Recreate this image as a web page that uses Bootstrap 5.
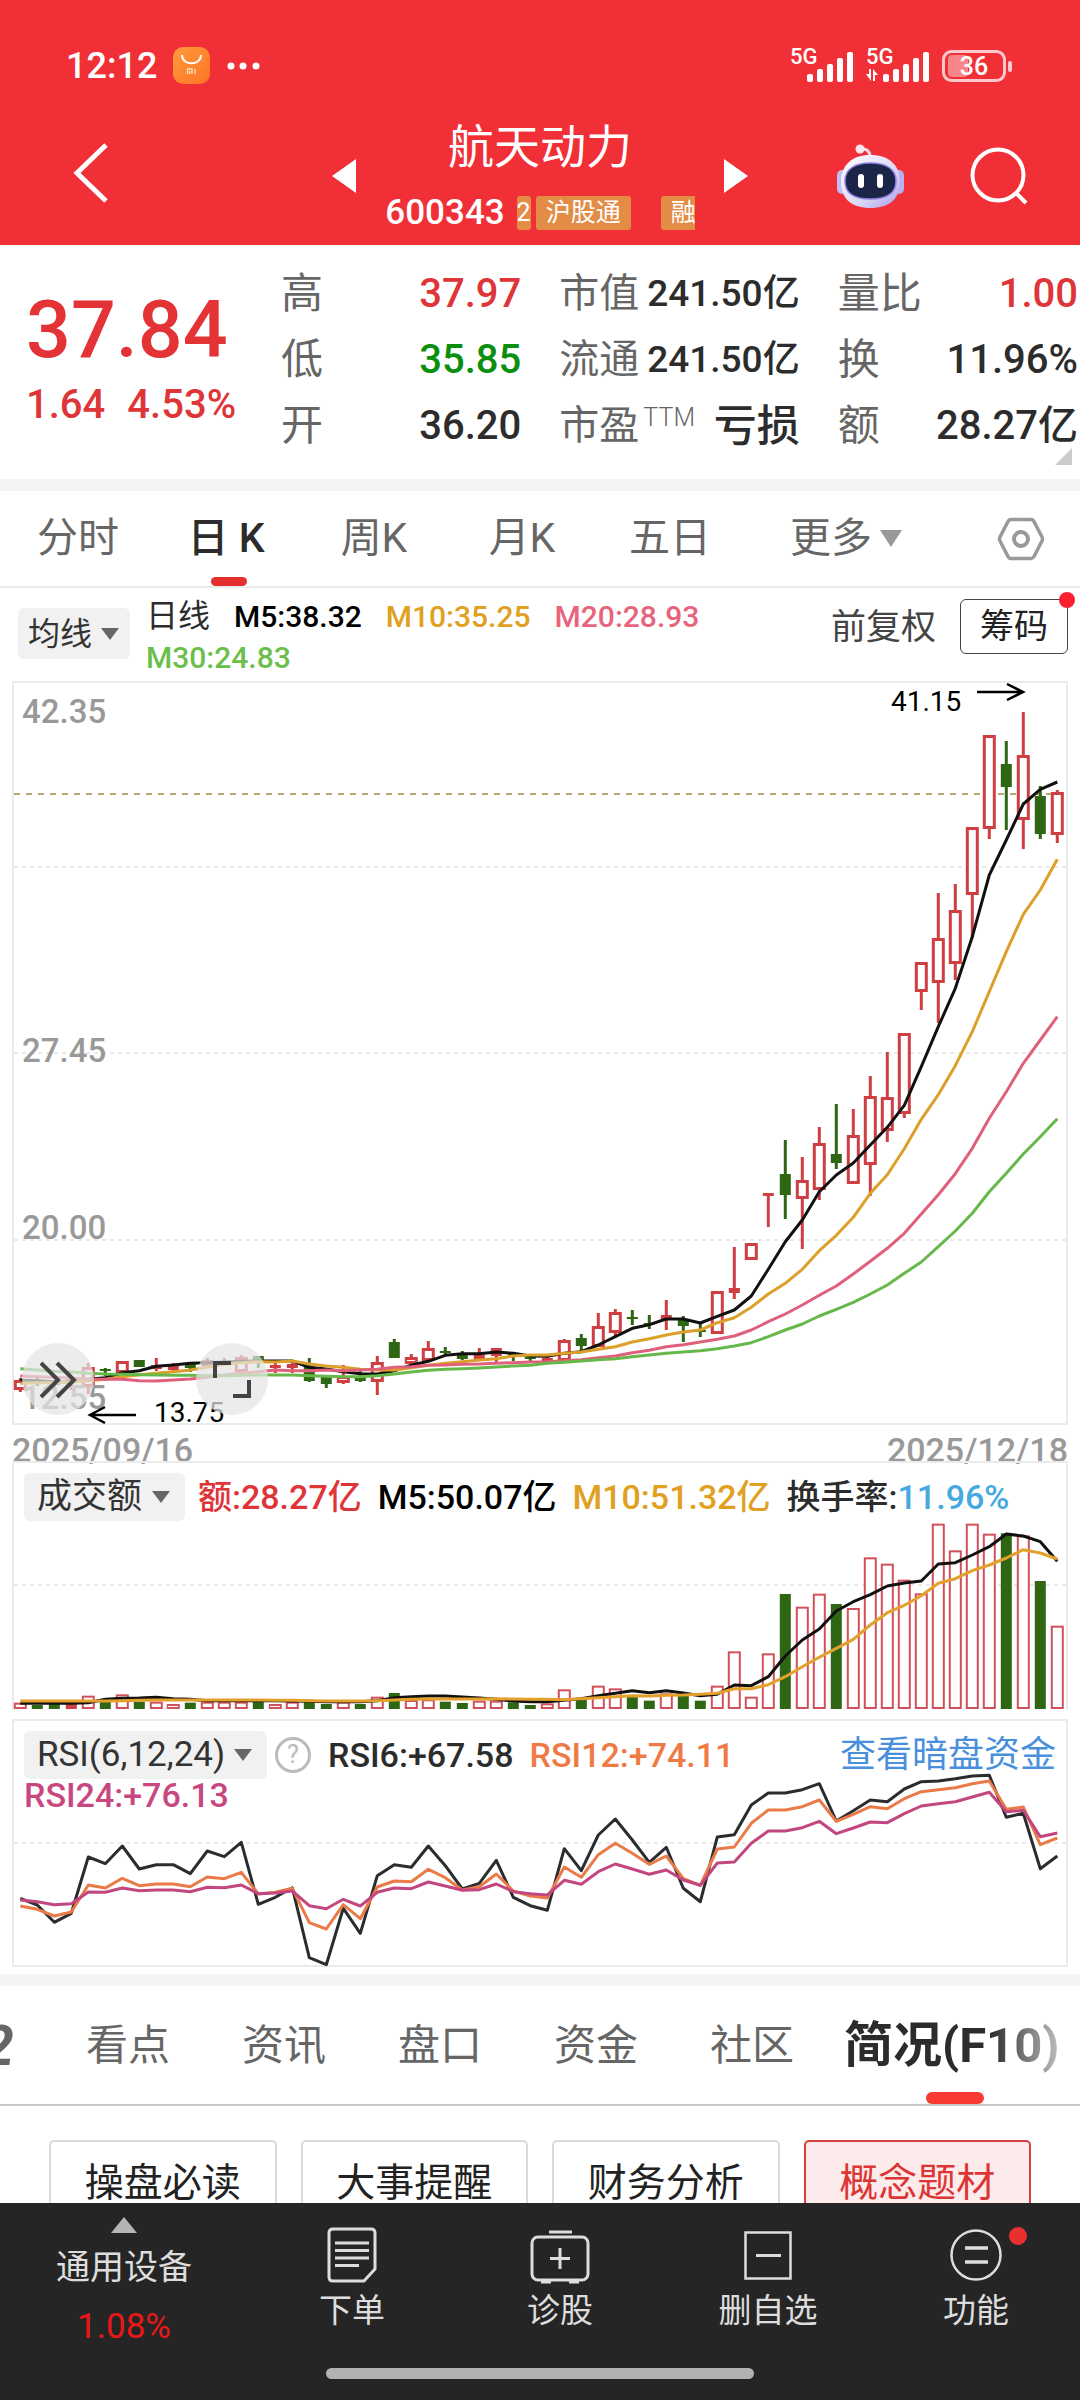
<!DOCTYPE html>
<html lang="zh-CN">
<head>
<meta charset="utf-8">
<meta name="viewport" content="width=device-width, initial-scale=1">
<title>航天动力 600343</title>
<link href="https://cdn.jsdelivr.net/npm/bootstrap@5.3.0/dist/css/bootstrap.min.css" rel="stylesheet">
<style>
  :root { --brand:#f12f37; --up:#de3538; --down:#0a8f0e; --ink:#2c2c2c; --muted:#666; }
  body { font-family:Roboto,"Noto Sans CJK SC",sans-serif; color:var(--ink); background:#fff; overflow-x:hidden; }
  button, select { font-family:inherit; color:inherit; }
  svg { display:block; overflow:visible; }
  a { text-decoration:none; color:inherit; }
  .plain { background:none; border:0; padding:0; }
  .topbar { background:var(--brand); color:#fff; padding-bottom:8px; }
  .statusbar { padding:36px 66px 0 66px; height:96px; }
  .clock { font-size:36px; font-weight:500; line-height:60px; }
  .titlebar { display:grid; grid-template-columns:1fr auto 1fr; align-items:center; padding:0 52px; margin-top:19px; height:122px; }
  .back-btn { margin-left:20px; }
  .stock-id { width:368px; text-align:center; padding-bottom:5px; }
  .stock-name { font-size:46px; line-height:60px; font-weight:400; margin:0; }
  .stock-code { font-size:35px; line-height:36px; font-weight:500; margin-right:12px; }
  .codeline { height:36px; margin-top:18px; }
  .tagstrip { width:178px; height:34px; overflow:hidden; gap:5px; }
  .tag { background:#e38c46; font-size:25px; line-height:34px; padding:0 10px; border-radius:3px; flex:none; }
  .tag-cut { width:14px; padding:0; overflow:hidden; direction:rtl; }
  .tag-gap { margin-left:25px; }

  .quote { padding:16px 2px 0 26px; height:234px; position:relative; }
  .quote-main { width:255px; padding-top:27px; color:#e33336; flex:none; }
  .price { font-size:79px; line-height:84px; font-weight:500; }
  .change { font-size:40px; line-height:44px; margin-top:11px; gap:22px; color:var(--up); font-weight:500; }
  .quote-cols { gap:38px; }
  .figures { margin:0; }
  .figures > div { display:flex; justify-content:space-between; align-items:center; height:66px; white-space:nowrap; }
  .figures dt { font-weight:400; font-size:42px; line-height:66px; color:var(--muted); }
  .figures dd { margin:0; font-size:40px; line-height:66px; font-weight:500; }
  .figures-tight dt { font-size:40px; }
  .figures-tight dd { font-size:37px; }
  .figures-tight .loss { font-size:43px; }
  .figures sup { font-size:25px; font-weight:300; top:-13px; margin-left:4px; }
  .up { color:var(--up); } .down { color:var(--down); }
  .corner { position:absolute; right:8px; bottom:14px; border-left:17px solid transparent; border-bottom:17px solid #ccc; }
  .band { height:12px; background:#f4f4f4; }

  .periods { height:97px; padding:0 36px 0 4px; border-bottom:2px solid #ebebeb; }
  .period { width:148px; height:95px; font-size:41px; line-height:95px; color:var(--muted); text-align:center; position:relative; }
  .period.active { color:var(--ink); font-weight:500; }
  .period.active::after { content:""; position:absolute; left:59px; bottom:0; width:36px; height:9px; border-radius:5px; background:#e3302f; }
  .period-more { width:204px; }
  .caret { display:inline-block; border:11px solid transparent; border-top:17px solid #999; border-bottom:0; vertical-align:5px; margin-left:8px; }

  .legendbar { height:93px; padding:7px 12px 0 18px; }
  .picker { position:relative; flex:none; }
  .picker::after { content:""; position:absolute; right:15px; top:50%; margin-top:-6px; border:9px solid transparent; border-top:12px solid #666; border-bottom:0; pointer-events:none; }
  .picker select { appearance:none; border:0; border-radius:6px; background:#f1f1f1; color:#333; font-size:35px; line-height:48px; height:48px; padding:0 0 0 13px; width:161px; display:block; }
  .picker-ma { margin-top:13px; }
  .picker-ma select { font-size:32px; height:51px; padding-left:10px; width:112px; }
  .picker-ma::after { right:11px; }
  .picker-rsi select { width:243px; font-size:35px; }
  .ma-values { font-size:30px; line-height:41px; font-weight:500; column-gap:24px; margin-left:16px; padding-top:1px; width:670px; flex:none; }
  .ma-values .period-name { font-size:32px; font-weight:400; }
  .adjust { font-size:35px; line-height:55px; color:#444; white-space:nowrap; margin-top:5px; }
  .chip-btn { font-size:34px; line-height:53px; height:55px; border:1px solid #444; border-radius:6px; background:#fff; padding:0; width:108px; position:relative; color:#222; margin-top:4px; }
  .reddot { position:absolute; width:16px; height:16px; border-radius:50%; background:#fa2032; }
  .chip-btn .reddot { right:-8px; top:-8px; }

  .panel { margin:0 12px; border:2px solid #ebebeb; position:relative; }
  .panel svg.plot { width:100%; height:auto; }
  .panel-vol { border-bottom:0; margin-bottom:9px; }
  .panel-rsi { margin-bottom:7px; }
  .panel-head { position:absolute; top:10px; left:10px; right:10px; font-size:34px; line-height:48px; font-weight:500; white-space:nowrap; }
  .vol-values { margin-left:13px; gap:16px; }
  .dates { height:36px; padding:0 12px; font-size:34px; line-height:50px; color:#999; font-weight:500; }
  .round-btn { position:absolute; bottom:8px; width:72px; height:72px; border-radius:50%; border:0; padding:0; background:rgba(228,228,228,.72); }
  .rb-shift { left:8px; } .rb-full { left:182px; }
  .m10 { color:#e0a020; } .m20 { color:#e8647c; } .m30 { color:#6abf4b; }
  .r12 { color:#ef7a45; } .rate { color:#46a9e0; }
  .fund-link { color:#4a8fdc; font-size:36px; font-weight:400; }
  .help { width:36px; height:36px; border:3px solid #bbb; border-radius:50%; color:#bbb; font-size:25px; line-height:30px; text-align:center; margin:0 17px 0 8px; }
  .rsi2 { line-height:36px; margin-top:-2px; color:#c9477f; }

  .sections { height:120px; overflow:hidden; gap:72px; border-bottom:2px solid #c8c8c8; position:relative; white-space:nowrap; }
  .section-tab { font-size:42px; line-height:120px; color:var(--muted); width:84px; flex:none; }
  .section-cut { width:14px; display:flex; justify-content:flex-end; font-weight:700; font-size:56px; overflow:hidden; font-style:italic; }
  .section-tab.active { width:218px; font-size:49px; font-weight:700; color:var(--ink); position:relative; margin-left:-22px; }
  .section-tab.active::after { content:""; position:absolute; left:82px; bottom:0; width:58px; height:12px; border-radius:6px; background:#f93a33; }
  .sections::after { content:""; position:absolute; right:0; top:20px; width:90px; height:70px; background:linear-gradient(90deg,rgba(255,255,255,0),rgba(255,255,255,.9)); }
  .topics { padding:34px 49px 0; gap:24px; }
  .topic { flex:1; height:84px; border:2px solid #dadada; border-radius:5px; background:#fff; font-size:39px; line-height:82px; padding:0; color:#222; }
  .topic.active { border-color:#d8403f; background:#fdeaea; color:#dc3535; }

  .dock { background:#252525; color:#ddd; height:197px; }
  .dock-row { height:150px; }
  .dock-item { font-size:33px; line-height:44px; height:130px; padding-top:22px; position:relative; width:208px; }
  .dock-item svg { margin:0 auto 5px; }
  .dock-index { width:248px; height:150px; padding:12px 0 0 0; font-size:34px; line-height:50px; text-align:center; }
  .dock-index .tri { border:13px solid transparent; border-bottom:16px solid #b4b4b4; border-top:0; display:block; width:26px; margin:0 auto 9px; }
  .dock-index .pct { color:#ea1717; font-size:35px; display:block; margin-top:10px; }
  .dock-index .nm { display:block; }
  .dock .reddot { width:18px; height:18px; left:137px; top:24px; background:#e8302f; }
  .homebar { width:428px; height:11px; border-radius:6px; background:#b1b1b1; margin:15px auto 0; }
</style>
<script src="https://cdn.jsdelivr.net/npm/bootstrap@5.3.0/dist/js/bootstrap.bundle.min.js"></script>
</head>
<body>
<header class="topbar">
  <div class="statusbar d-flex align-items-center">
    <span class="clock">12:12</span>
    <svg class="ms-3" width="38" height="38" viewBox="0 0 38 38" aria-hidden="true"><defs><linearGradient id="mi" x1="0" y1="0" x2="1" y2="1"><stop offset="0" stop-color="#ff9a3c"/><stop offset="1" stop-color="#ff7426"/></linearGradient></defs><rect width="37" height="37" rx="10" fill="url(#mi)"/><path d="M9 8c0 11 19 11 19 0" fill="none" stroke="#fff" stroke-width="2"/><path d="M14.500 27v-5h4.500v5M16.800 24v3M22 22v5" fill="none" stroke="#ffe2c4" stroke-width="1.300"/></svg>
    <svg class="ms-3" width="34" height="8" viewBox="0 0 34 8" fill="#fff" aria-hidden="true"><circle cx="4" cy="4" r="3.500"/><circle cx="16" cy="4" r="3.500"/><circle cx="29" cy="4" r="3.500"/></svg>
    <svg class="ms-auto" width="226" height="52" viewBox="788 39 226 52" fill="#fff" role="img" aria-label="5G 信号 36%">
      <g font-size="22" font-weight="500"><text x="790" y="63">5G</text><text x="866" y="63">5G</text></g>
      <rect x="807" y="73" width="6" height="8" rx="2"/><rect x="817" y="68" width="6" height="13" rx="2"/><rect x="827" y="63" width="6" height="18" rx="2"/><rect x="837" y="57" width="6" height="24" rx="2"/><rect x="847" y="51" width="6" height="30" rx="2"/>
      <rect x="883" y="73" width="6" height="8" rx="2"/><rect x="893" y="68" width="6" height="13" rx="2"/><rect x="903" y="63" width="6" height="18" rx="2"/><rect x="913" y="57" width="6" height="24" rx="2"/><rect x="923" y="51" width="6" height="30" rx="2"/>
      <path d="M866 73h3v-5h2v12zM873 80V68l5 6h-3v6z"/>
      <rect x="943.500" y="50.500" width="61" height="29" rx="8" fill="none" stroke="#fbc9cb" stroke-width="3"/><rect x="948" y="54" width="20" height="22" rx="4" fill="#f8858a"/><rect x="1008" y="60" width="4" height="11" rx="2" fill="#fbc9cb"/>
      <text x="974" y="74" font-size="25" text-anchor="middle" font-weight="500">36</text>
    </svg>
  </div>
  <div class="titlebar">
    <div><button class="plain back-btn" aria-label="返回"><svg width="38" height="62" viewBox="0 0 38 62" fill="none" stroke="#fff" stroke-width="5"><path d="M34 3 5 31l29 28"/></svg></button></div>
    <div class="d-flex align-items-center">
      <button class="plain" aria-label="上一只"><svg width="24" height="36" viewBox="0 0 24 36" fill="#fff"><path d="M24 1v34L0 18z"/></svg></button>
      <div class="stock-id">
        <h1 class="stock-name">航天动力</h1>
        <div class="codeline d-flex align-items-center justify-content-center">
          <span class="stock-code">600343</span>
          <div class="tagstrip d-flex"><span class="tag tag-cut">2</span><span class="tag">沪股通</span><span class="tag tag-gap">融</span></div>
        </div>
      </div>
      <button class="plain" aria-label="下一只"><svg width="24" height="36" viewBox="0 0 24 36" fill="#fff"><path d="M0 1v34l24-17z"/></svg></button>
    </div>
    <div class="d-flex justify-content-end align-items-center">
      <button class="plain me-5" aria-label="智能助手"><svg class="me-3" width="70" height="66" viewBox="0 0 70 66">
        <defs><linearGradient id="rb" x1="0" y1="0" x2="1" y2="1"><stop offset="0" stop-color="#fff"/><stop offset=".6" stop-color="#dcd8f6"/><stop offset="1" stop-color="#a99be6"/></linearGradient></defs>
        <path d="M34 14c0-6-3-8-10-9" fill="none" stroke="#f4dce8" stroke-width="3"/><circle cx="24" cy="6" r="4.500" fill="#fbe6ee"/>
        <rect x="1" y="27" width="10" height="24" rx="5" fill="#c4bdf2"/><rect x="58" y="27" width="10" height="24" rx="5" fill="#b8aef0"/>
        <path d="M34.500 12C53 12 64 22 64 39S53 65 34.500 65 5 56 5 39s11-27 29.500-27z" fill="url(#rb)"/>
        <path d="M34.500 20C50 20 60 26 60 38s-9 18-25.500 18S9 50 9 38s10-18 25.500-18z" fill="#1b2547" stroke="#8c7fe0" stroke-width="1.500"/>
        <rect x="22" y="31" width="6" height="14" rx="3" fill="#fff"/><rect x="41" y="31" width="6" height="14" rx="3" fill="#fff"/></svg></button>
      <button class="plain" aria-label="搜索"><svg width="58" height="58" viewBox="0 0 58 58" fill="none" stroke="#fff" stroke-width="4"><circle cx="28" cy="28" r="25.500"/><path d="m46 46 10 10"/></svg></button>
    </div>
  </div>
</header>

<main>
  <section class="quote d-flex">
    <div class="quote-main">
      <div class="price">37.84</div>
      <div class="change d-flex"><span>1.64</span><span>4.53%</span></div>
    </div>
    <div class="quote-cols d-flex flex-grow-1">
      <dl class="figures w-100"><div><dt>高</dt><dd class="up">37.97</dd></div><div><dt>低</dt><dd class="down">35.85</dd></div><div><dt>开</dt><dd>36.20</dd></div></dl>
      <dl class="figures figures-tight w-100"><div><dt>市值</dt><dd>241.50亿</dd></div><div><dt>流通</dt><dd>241.50亿</dd></div><div><dt>市盈<sup>TTM</sup></dt><dd class="loss">亏损</dd></div></dl>
      <dl class="figures w-100"><div><dt>量比</dt><dd class="up">1.00</dd></div><div><dt>换</dt><dd>11.96%</dd></div><div><dt>额</dt><dd>28.27亿</dd></div></dl>
    </div>
    <span class="corner"></span>
  </section>
  <div class="band"></div>

  <nav class="periods d-flex align-items-start">
    <button class="plain period">分时</button><button class="plain period active">日 K</button><button class="plain period">周K</button><button class="plain period">月K</button><button class="plain period">五日</button><button class="plain period period-more">更多<span class="caret"></span></button>
    <button class="plain ms-auto align-self-center" aria-label="设置"><svg width="46" height="44" viewBox="0 0 46 44" fill="none" stroke="#999" stroke-width="4"><path d="M13 2.500h20q2 0 3 2L44 20q1 2 0 4l-8 15.500q-1 2-3 2H13q-2 0-3-2L2 24q-1-2 0-4l8-15.500q1-2 3-2z" stroke-width="3.500"/><circle cx="23" cy="22" r="7"/></svg></button>
  </nav>

  <div class="legendbar d-flex align-items-start">
    <label class="picker picker-ma"><select aria-label="均线"><option>均线</option></select></label>
    <div class="ma-values d-flex flex-wrap"><span class="period-name">日线</span><span class="text-black">M5:38.32</span><span class="m10">M10:35.25</span><span class="m20">M20:28.93</span><span class="m30">M30:24.83</span></div>
    <span class="adjust ms-auto">前复权</span>
    <button class="chip-btn ms-4">筹码<span class="reddot"></span></button>
  </div>

  <section class="panel">
    <svg class="plot" id="kline" viewBox="14 683 1052 740" role="img" aria-label="日K线"></svg>
    <button class="round-btn rb-shift" aria-label="右移"><svg width="72" height="72" viewBox="0 0 72 72" fill="none" stroke="#444" stroke-width="4"><path d="m19 20 17 17-17 17M35 20l17 17-17 17"/></svg></button>
    <button class="round-btn rb-full" aria-label="全屏"><svg width="72" height="72" viewBox="0 0 72 72" fill="none" stroke="#444" stroke-width="4"><path d="M19 35V20h16M53 37v16H37"/></svg></button>
  </section>
  <div class="dates d-flex justify-content-between"><span>2025/09/16</span><span>2025/12/18</span></div>

  <section class="panel panel-vol">
    <svg class="plot" id="volume" viewBox="14 1463 1052 247" role="img" aria-label="成交额"></svg>
    <div class="panel-head d-flex"><label class="picker"><select aria-label="成交额"><option>成交额</option></select></label>
      <div class="vol-values d-flex"><span class="up">额:28.27亿</span><span class="text-black">M5:50.07亿</span><span class="m10">M10:51.32亿</span><span>换手率:<span class="rate">11.96%</span></span></div></div>
  </section>

  <section class="panel panel-rsi">
    <svg class="plot" id="rsi" viewBox="14 1721 1052 244" role="img" aria-label="RSI"></svg>
    <div class="panel-head">
      <div class="d-flex align-items-center"><label class="picker picker-rsi"><select aria-label="RSI(6,12,24)"><option>RSI(6,12,24)</option></select></label>
        <button class="plain help" aria-label="说明">?</button><span>RSI6:+67.58</span><span class="ms-3 r12">RSI12:+74.11</span>
        <a href="#" class="ms-auto fund-link">查看暗盘资金</a></div>
      <div class="rsi2">RSI24:+76.13</div>
    </div>
  </section>
  <div class="band"></div>

  <nav class="sections d-flex">
    <a href="#" class="section-tab section-cut">2</a><a href="#" class="section-tab">看点</a><a href="#" class="section-tab">资讯</a><a href="#" class="section-tab">盘口</a><a href="#" class="section-tab">资金</a><a href="#" class="section-tab">社区</a><a href="#" class="section-tab active">简况(F10)</a>
  </nav>
  <div class="topics d-flex">
    <button class="topic">操盘必读</button><button class="topic">大事提醒</button><button class="topic">财务分析</button><button class="topic active">概念题材</button>
  </div>
</main>

<footer class="dock fixed-bottom">
  <div class="dock-row d-flex">
    <button class="plain dock-index"><span class="tri"></span><span class="nm">通用设备</span><span class="pct">1.08%</span></button>
    <button class="plain dock-item"><svg width="50" height="58" viewBox="0 0 50 58" fill="none" stroke="#ddd" stroke-width="3"><path d="M6 3h38q4 0 4 4v36L37 55H6q-4 0-4-4V7q0-4 4-4z"/><path d="M8 17h34M8 24.500h34M8 32h34M8 39.500h24"/></svg>下单</button>
    <button class="plain dock-item"><svg width="60" height="58" viewBox="0 0 60 58" fill="none" stroke="#ddd" stroke-width="3"><path d="M19 6h23"/><rect x="2" y="11" width="56" height="43" rx="6"/><path d="M30 22v21M20 32.500h20M11 56h10M39 56h10"/></svg>诊股</button>
    <button class="plain dock-item"><svg width="48" height="58" viewBox="0 0 48 58" fill="none" stroke="#ddd" stroke-width="2.500"><rect x="1.500" y="6.500" width="45" height="46"/><path d="M12 29.500h25" stroke-width="3"/></svg>删自选</button>
    <button class="plain dock-item"><svg width="52" height="58" viewBox="0 0 52 58" fill="none" stroke="#ddd" stroke-width="2.500"><circle cx="26" cy="29" r="24.500"/><path d="M15 22h23M15 36h23" stroke-width="3.500"/></svg>功能<span class="reddot"></span></button>
  </div>
  <div class="homebar"></div>
</footer>

<script>
const x = i => 20.3 + i * 17;
const RED = '#cf3e42', GREEN = '#2f6614';
const poly = (ys, colour, w) => `<polyline fill="none" stroke="${colour}" stroke-width="${w}" stroke-linejoin="round" points="${ys.map((y, i) => x(i).toFixed(1) + ',' + y.toFixed(1)).join(' ')}"/>`;
const grid = (y, colour = '#e2e2e2', dash = '4 4', w = 1.5) => `<line x1="14" x2="1066" y1="${y}" y2="${y}" stroke="${colour}" stroke-width="${w}" stroke-dasharray="${dash}"/>`;
const third = (base, list) => list.map(v => base + v / 3);

// kind, high, body top, body bottom, low; r = hollow rise, R = solid rise, g = fall
const candles = [
['r',1378,1380,1390,1392],['g',1378,1380,1383,1386],['g',1380,1382,1385,1387],['R',1376,1379,1382,1390],['r',1363,1367,1387,1394],['g',1368,1369,1371,1376],['r',1361,1361,1373,1373],['g',1360,1360,1367,1367],['R',1358,1365,1369,1371],['R',1363,1366,1370,1371],
['g',1363,1364,1368,1372],['R',1358,1360,1367,1367],['R',1358,1361,1364,1366],['r',1355,1357,1372,1372],['g',1356,1356,1362,1368],['R',1363,1365,1368,1373],['R',1363,1364,1368,1373],['g',1358,1367,1381,1382],['g',1375,1377,1384,1388],['r',1365,1376,1383,1384],
['g',1370,1376,1381,1382],['r',1356,1362,1382,1395],['g',1339,1342,1358,1358],['r',1354,1357,1364,1364],['r',1341,1348,1361,1361],['g',1347,1351,1353,1356],['g',1351,1353,1359,1360],['R',1348,1355,1360,1361],['R',1348,1348,1356,1363],['g',1352,1353,1355,1361],
['g',1354,1356,1359,1361],['R',1356,1358,1361,1362],['r',1339,1340,1361,1361],['g',1334,1338,1346,1351],['r',1313,1326,1347,1347],['r',1309,1312,1333,1337],['g',1310,1317,1319,1325],['g',1315,1323,1325,1329],['R',1300,1315,1319,1330],['g',1316,1320,1326,1342],
['g',1323,1330,1332,1337],['r',1291,1291,1334,1334],['R',1247,1288,1293,1299],['r',1243,1243,1260,1260],['R',1193,1193,1196,1227],['g',1140,1174,1195,1219],['r',1157,1180,1199,1249],['r',1127,1143,1190,1200],['g',1104,1154,1163,1169],['r',1109,1135,1184,1184],
['r',1076,1096,1165,1196],['r',1052,1097,1131,1142],['r',1033,1033,1114,1118],['r',962,962,992,1010],['r',893,938,983,1023],['r',884,910,964,980],['r',827,827,895,938],['r',735,735,829,839],['g',741,764,787,830],['r',712,755,820,849],['g',786,796,834,839],['r',790,792,835,843]];
const low = l => third(1280, l), mid = l => third(1000, l), high = l => third(580, l);
const ma5 = [...low([300,302,305,306,298,293,278,272,259,255,250,248,246,244,243,243,243,262,267,275,281,282,272,256,244,226,221,221,216,220,228]), ...mid([1069,1060,1055,1035,1010,985,974,957,957,969,949,930,888,808,725,660,575,525,489,435,382,316,200,80]), ...high([1225,1070,885,780,672,628,606])];
const ma10 = [...low([310,308,308,306,302,298,290,284,280,275,270,262,253,248,245,246,243,252,258,262,268,270,270,263,256,250,245,240,236,228,225]), ...mid([1065,1060,1056,1048,1040,1026,1016,1005,996,990,968,953,922,882,850,808,752,706,652,580,524,446,358,284,197]), ...high([1355,1235,1115,1003,930,838])];
const ma20 = [...low([288,290,292,294,298,298,298,302,303,300,297,292,285,280,275,270,272,272,270,272,270,268,262,260,256,255,253,252,250,248,246]), ...mid([1085,1082,1079,1073,1068,1058,1051,1040,1034,1026,1018,1008,990,965,942,915,886,858,822,784,745,700,642,584,521,445,355,275,190,120,50])];
const ma30 = [...low([266,270,274,276,280,282,283,284,285,286,286,287,287,286,285,285,285,287,289,290,290,287,282,276,271,268,266,264,261,258,256]), ...mid([1090,1087,1083,1079,1076,1070,1065,1060,1056,1052,1046,1038,1028,1010,990,972,948,928,907,882,855,820,786,740,693,640,575,520,462,410,356])];

let k = grid(867) + grid(1053) + grid(1240) + grid(794, '#b8a86c', '6 6', 2);
candles.forEach(([t, h, a, b, l], i) => {
  const c = t === 'g' ? GREEN : RED, cx = x(i);
  k += `<path d="M${cx} ${h}V${a}M${cx} ${b}V${l}" stroke="${c}" stroke-width="3"/>`;
  k += t === 'r' ? `<rect x="${cx - 5}" y="${a + 1.5}" width="10" height="${b - a - 3}" fill="#fff" stroke="${c}" stroke-width="3"/>`
    : `<rect x="${cx - 5.5}" y="${a}" width="11" height="${b - a}" fill="${c}"/>`;
});
k += poly(ma5, '#111', 3) + poly(ma10, '#dca02a', 3) + poly(ma20, '#e0607c', 3) + poly(ma30, '#66b84a', 3);
k += `<g font-size="33" font-weight="500" fill="#999"><text x="22" y="723">42.35</text><text x="22" y="1062">27.45</text><text x="22" y="1239">20.00</text><text x="22" y="1409">12.55</text></g>
<g font-size="28" fill="#000"><text x="891" y="711">41.15</text><text x="154" y="1422">13.75</text></g>
<path d="M977 692h46M1007 684l16 8-16 8M136 1415H90M105 1407l-15 8 15 8" fill="none" stroke="#000" stroke-width="2.5"/>`;
document.getElementById('kline').innerHTML = k;

const kinds = 'rggRrgrgrrgrrrgrrggrgrgrrggrrggrrgrrggrggrrrrgrrgrrrrrrrrrgrgr'.split('');
const vol = third(1430, [818,825,820,820,797,815,793,815,815,822,818,815,815,815,815,822,815,813,822,815,822,800,789,810,808,815,819,812,812,817,825,820,778,808,767,775,796,812,790,796,812,767,664,800,670,492,530,491,522,534,382,401,449,490,281,361,281,311,310,316,453,587]);
const v5 = third(1430, [820,820,820,820,818,808,805,804,802,806,808,812,812,812,812,812,813,814,815,815,815,812,803,800,798,798,801,804,808,813,815,815,811,806,797,790,782,788,782,789,797,793,765,767,740,678,630,597,543,515,494,468,459,453,402,398,375,350,312,318,335,394]);
const v10 = third(1430, [813,813,813,813,813,813,812,811,810,810,810,810,810,810,810,811,811,812,813,813,813,812,810,808,807,807,807,807,806,807,808,808,809,806,803,800,797,798,796,795,793,790,776,776,764,740,710,682,655,628,585,548,526,497,460,446,422,405,384,359,369,387]);
let v = grid(1585);
vol.forEach((y, i) => {
  const t = kinds[i], cx = x(i);
  v += t === 'r' ? `<rect x="${cx - 5.5}" y="${y + 1}" width="11" height="${1708 - y - 1}" fill="#fff" stroke="#d2505a" stroke-width="2"/>`
    : `<rect x="${cx - 5.5}" y="${y}" width="11" height="${1709 - y}" fill="${t === 'g' ? GREEN : RED}"/>`;
});
v += poly(v5, '#111', 3) + poly(v10, '#e3a02a', 3);
document.getElementById('volume').innerHTML = v;

const r6 = third(1700, [595,615,667,640,471,491,438,507,494,494,521,453,470,427,613,592,563,773,794,625,700,527,494,502,438,497,567,550,481,592,617,631,446,512,405,357,420,487,442,565,605,411,404,315,279,279,269,251,363,332,300,305,267,245,243,236,228,226,352,340,506,468]);
const r12 = third(1700, [618,628,648,636,555,564,535,557,552,552,560,531,536,517,582,577,565,668,687,614,656,561,543,545,508,533,570,560,522,573,588,594,501,532,464,430,460,493,468,536,556,447,441,370,330,330,320,300,364,343,320,326,296,275,269,263,251,243,328,321,434,414]);
const r24 = third(1700, [600,605,614,611,576,577,564,572,570,570,575,562,563,555,581,579,573,617,626,598,618,577,564,566,546,558,571,569,552,575,581,585,541,553,515,492,507,523,510,540,556,489,486,430,393,393,383,364,401,384,366,368,341,318,311,305,291,277,335,331,410,399]);
document.getElementById('rsi').innerHTML = grid(1843) + poly(r6, '#2a2d30', 3) + poly(r12, '#ea7a48', 3) + poly(r24, '#c24680', 3);
</script>
</body>
</html>
